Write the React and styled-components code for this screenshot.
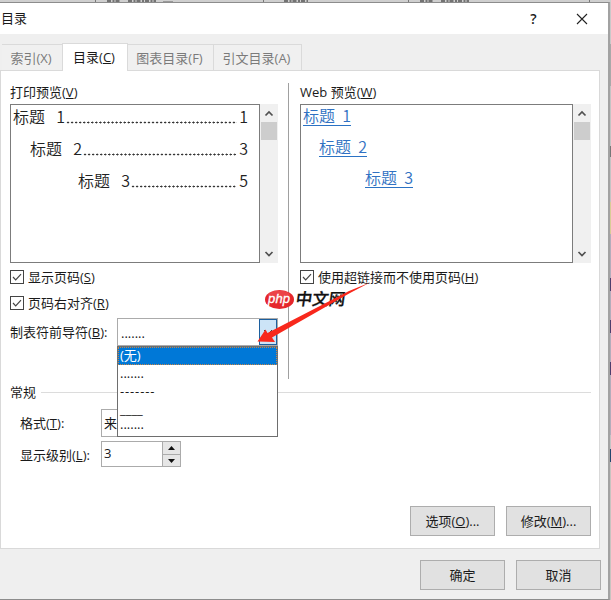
import styled, { createGlobalStyle, css } from 'styled-components'

const GlobalStyle = createGlobalStyle`
* { box-sizing: border-box; }
body {
  margin: 0;
  overflow: hidden;
  background: #c9c9c9;
  color: #1a1a1a;
  font-family: "Open Sans", "Noto Sans CJK SC", sans-serif;
  font-size: 13px;
}
`

const Desktop = styled.div`
position: relative;
display: grid;
grid-template-columns: 610px 1px;
grid-template-rows: 2px 598px;
width: 611px;
height: 600px;
overflow: hidden;
`

const Ribbon = styled.div`
grid-column: 1 / 3;
overflow: hidden;
background: #cfcfcf;
svg { display: block; }
`

const Strip = styled.div`
display: flex;
flex-direction: column;
background: #bdbdbd;
`

const Patch = styled.div`
height: ${(p) => p.$h}px;
background: ${(p) => p.$color};
`

const Dialog = styled.div`
display: flex;
flex-direction: column;
border: 1px solid #8c8c8c;
border-left: none;
border-right: 2px solid #a2a2a2;
background: #efefef;
`

const TitleBar = styled.div`
display: flex;
align-items: center;
height: 31px;
padding: 0 20px 0 1px;
background: #fff;
h1 {
  flex: 1;
  margin: 0;
  padding-bottom: 2px;
  font-size: 13px;
  font-weight: 400;
}
svg { display: block; }
`

const Help = styled.span`
width: 9px;
margin-right: 38px;
padding-bottom: 1px;
font-size: 14px;
font-weight: 600;
text-align: center;
`

const Tabs = styled.div`
display: flex;
align-items: flex-end;
height: 37px;
padding-left: 2px;
position: relative;
z-index: 1;
margin-bottom: -1px;
`

const Tab = styled.div`
width: ${(p) => p.$w}px;
height: 27px;
display: flex;
align-items: center;
justify-content: center;
padding: 0 2px 1px 0;
white-space: nowrap;
border: 1px solid #dadada;
border-left: none;
background: #f0f0f0;
color: #7b7b7b;
${(p) => p.$first && css`border-right: none;`}
${(p) => p.$active && css`
height: 28px;
padding-bottom: 3px;
border-left: 1px solid #dadada;
border-bottom: none;
background: #fff;
color: #1a1a1a;
`}
`

const Page = styled.div`
width: 600px;
height: 479px;
display: flex;
flex-direction: column;
padding: 12px 8px 12px 9px;
border: 1px solid #d9d9d9;
background: #fff;
`

const Columns = styled.div`
display: flex;
height: 296px;
`

const Column = styled.div`
display: flex;
flex-direction: column;
width: ${(p) => p.$w}px;
`

const Divider = styled.div`
width: 1px;
margin: 0 11px 0 10px;
background: #a0a0a0;
`

const Caption = styled.div`
height: 21px;
line-height: 18px;
white-space: nowrap;
`

const Preview = styled.div`
display: flex;
height: 159px;
`

const Sheet = styled.div`
flex: 1;
padding: 1px 11px 0 2px;
border: 1px solid #7c7c7c;
font-family: "Noto Sans CJK SC", sans-serif;
font-size: 16px;
font-weight: 350;
color: #222;
`

const Entry = styled.div`
display: flex;
height: ${(p) => p.$h || 32}px;
line-height: ${(p) => (p.$h ? 21 : 20)}px;
padding-left: ${(p) => p.$indent}px;
word-spacing: ${(p) => (p.$h ? 0 : 2)}px;
white-space: pre;
`

const Leader = styled.span`
flex: 1;
height: 18px;
margin: 0 2px 0 1px;
background: radial-gradient(circle, #333 0 0.8px, transparent 1.2px) left bottom / 4.05px 3px repeat-x;
`

const Link = styled.span`
height: 20px;
line-height: 19px;
border-bottom: 1px solid #2b72c4;
color: #3071c2;
`

const Scroll = styled.div`
display: flex;
flex-direction: column;
width: 18px;
padding-left: 1px;
background: #f0f0f0;
svg { display: block; }
`

const Thumb = styled.div`
height: 18px;
width: 16px;
margin-bottom: auto;
background: #cdcdcd;
`

const Check = styled.div`
display: flex;
align-items: center;
height: 14px;
margin-top: ${(p) => p.$top}px;
gap: 4px;
white-space: nowrap;
svg { display: block; }
> span { padding-bottom: 1px; }
`

const ComboRow = styled.div`
display: flex;
position: relative;
align-items: center;
height: 28px;
margin-top: 8px;
`

const ComboLabel = styled.span`
width: 107px;
padding-bottom: 2px;
white-space: nowrap;
`

const Combo = styled.div`
display: flex;
width: 161px;
height: 28px;
padding-left: 3px;
border: 1px solid #ababab;
line-height: 28px;
> span { flex: 1; }
`

const DropButton = styled.div`
display: flex;
align-items: center;
justify-content: center;
width: 18px;
border: 1px solid #1c5f9e;
background: #cce4f7;
`

const Menu = styled.div`
position: absolute;
z-index: 2;
top: 28px;
left: 107px;
width: 161px;
height: 91px;
border: 1px solid #6e6e6e;
background: #fff;
`

const Option = styled.div`
height: ${(p) => p.$h || 18}px;
padding-left: 2px;
line-height: ${(p) => p.$line || 17}px;
letter-spacing: ${(p) => p.$spacing || 0}px;
${(p) => p.$selected && css`
background: #0078d7;
color: #fff;
outline: 1px dotted #c98545;
outline-offset: -1px;
`}
`

const Legend = styled.div`
display: flex;
align-items: center;
gap: 5px;
height: 18px;
margin-top: 4px;
span { padding-bottom: 2px; }
&::after {
  content: "";
  flex: 1;
  height: 1px;
  background: #dcdcdc;
}
`

const Field = styled.div`
display: flex;
align-items: center;
height: ${(p) => p.$h}px;
margin-top: ${(p) => p.$top}px;
padding-left: 10px;
`

const FieldLabel = styled.span`
width: 81px;
padding-bottom: ${(p) => p.$lift || 0}px;
white-space: nowrap;
`

const Input = styled.div`
display: flex;
width: ${(p) => p.$w}px;
height: 100%;
padding-left: 2px;
border: 1px solid #ababab;
line-height: ${(p) => p.$line}px;
> span { flex: 1; }
`

const Spinner = styled.div`
display: flex;
flex-direction: column;
width: 18px;
background: #e6e6e6;
border-left: 1px solid #ababab;
svg { display: block; flex: 1; }
svg + svg { border-top: 1px solid #ababab; }
`

const Buttons = styled.div`
display: flex;
justify-content: flex-end;
gap: 11px;
margin-top: auto;
`

const Footer = styled(Buttons)`
margin-top: 11px;
padding-right: 7px;
`

const Button = styled.div`
display: flex;
align-items: center;
justify-content: center;
width: 85px;
height: 30px;
padding-bottom: 2px;
border: 1px solid #adadad;
background: #e1e1e1;
`

const Overlay = styled.svg`
position: absolute;
z-index: 3;
left: 250px;
top: 270px;
`

// slivers of the window behind the dialog's right edge
const patches = [
  [42, '#c9c9c9'], [42, '#a9a9a9'], [60, '#c4c4c4'], [11, '#777'], [45, '#c4c4c4'],
  [32, '#d9cc96'], [44, '#b3adbb'], [13, '#4e3d6c'], [29, '#b3adbb'], [13, '#4e3d6c'],
  [29, '#b3adbb'], [13, '#4e3d6c'], [60, '#b3adbb'], [14, '#c4c4c4'], [13, '#24466e'], [138, '#c8c4c0'],
]

function Key({ children, k, end = '' }) {
  return <span>{children}(<u>{k}</u>){end}</span>
}

function Scrollbar() {
  return (
    <Scroll>
      <svg width="16" height="18"><path d="M4.500 11.500L8 8l3.500 3.500" fill="none" stroke="#505050" strokeWidth="1.700" /></svg>
      <Thumb />
      <svg width="16" height="18"><path d="M4.500 7L8 10.500l3.500-3.500" fill="none" stroke="#505050" strokeWidth="1.700" /></svg>
    </Scroll>
  )
}

function Tick({ children, top }) {
  return (
    <Check $top={top}>
      <svg width="14" height="14">
        <rect x=".5" y=".5" width="13" height="13" fill="#fff" stroke="#444" />
        <path d="M3 7l2.700 2.800L11 4.200" fill="none" stroke="#444" strokeWidth="1.200" />
      </svg>
      {children}
    </Check>
  )
}

function App() {
  return (
    <>
      <GlobalStyle />
      <Desktop>
        <Ribbon>
          <svg width="611" height="2">
            <path d="M107 1h14M128 1h28M284 1h24M420 1h14M441 1h28" stroke="#555" strokeWidth="1.500" strokeDasharray="4 1.500 2 1" />
            <path d="M163 1.500h10" stroke="#999" />
            <path d="M95.500 0v2M263.500 0v2M408.500 0v2M589.500 0v2" stroke="#777" />
          </svg>
        </Ribbon>
        <Dialog>
          <TitleBar>
            <h1>目录</h1>
            <Help>?</Help>
            <svg width="12" height="12"><path d="M1 1l10 10M11 1L1 11" stroke="#222" strokeWidth="1.100" /></svg>
          </TitleBar>
          <Tabs>
            <Tab $w={60} $first>索引(X)</Tab>
            <Tab $w={66} $active><Key k="C">目录</Key></Tab>
            <Tab $w={86}>图表目录(F)</Tab>
            <Tab $w={88}>引文目录(A)</Tab>
          </Tabs>
          <Page>
            <Columns>
              <Column $w={268}>
                <Caption><Key k="V">打印预览</Key></Caption>
                <Preview>
                  <Sheet>
                    <Entry $indent={0}>标题  1<Leader />1</Entry>
                    <Entry $indent={17}>标题  2<Leader />3</Entry>
                    <Entry $indent={65}>标题  3<Leader />5</Entry>
                  </Sheet>
                  <Scrollbar />
                </Preview>
                <Tick top={7}><Key k="S">显示页码</Key></Tick>
                <Tick top={12}><Key k="R">页码右对齐</Key></Tick>
                <ComboRow>
                  <ComboLabel><Key k="B" end=":">制表符前导符</Key></ComboLabel>
                  <Combo>
                    <span>.......</span>
                    <DropButton>
                      <svg width="10" height="6"><path d="M1 1l4 4 4-4" fill="none" stroke="#444" /></svg>
                    </DropButton>
                  </Combo>
                  <Menu>
                    <Option $selected>(无)</Option>
                    <Option>.......</Option>
                    <Option $spacing={0.85}>-------</Option>
                    <Option $h={17}>____</Option>
                    <Option $h={14} $line={12}>.......</Option>
                  </Menu>
                </ComboRow>
              </Column>
              <Divider />
              <Column $w={291}>
                <Caption><Key k="W">Web 预览</Key></Caption>
                <Preview>
                  <Sheet>
                    <Entry $h={31} $indent={0}><Link>标题  1</Link></Entry>
                    <Entry $h={31} $indent={16}><Link>标题  2</Link></Entry>
                    <Entry $h={31} $indent={62}><Link>标题  3</Link></Entry>
                  </Sheet>
                  <Scrollbar />
                </Preview>
                <Tick top={7}><Key k="H">使用超链接而不使用页码</Key></Tick>
              </Column>
            </Columns>
            <Legend><span>常规</span></Legend>
            <Field $h={28} $top={8}>
              <FieldLabel $lift={2}><Key k="T" end=":">格式</Key></FieldLabel>
              <Input $w={177} $line={27}>来</Input>
            </Field>
            <Field $h={26} $top={4}>
              <FieldLabel><Key k="L" end=":">显示级别</Key></FieldLabel>
              <Input $w={80} $line={23}>
                <span>3</span>
                <Spinner>
                  <svg width="17" height="12"><path d="M5 8l3.500-4L12 8z" fill="#111" /></svg>
                  <svg width="17" height="12"><path d="M5 4l3.500 4L12 4z" fill="#111" /></svg>
                </Spinner>
              </Input>
            </Field>
            <Buttons>
              <Button><Key k="O" end="...">选项</Key></Button>
              <Button><Key k="M" end="...">修改</Key></Button>
            </Buttons>
          </Page>
          <Footer>
            <Button>确定</Button>
            <Button>取消</Button>
          </Footer>
        </Dialog>
        <Strip>
          {patches.map(([h, color], i) => <Patch key={i} $h={h} $color={color} />)}
        </Strip>
        <Overlay width="130" height="90">
          <ellipse cx="29.500" cy="29.500" rx="14.500" ry="9.500" fill="#e5262b" />
          <ellipse cx="29" cy="25" rx="11" ry="4.500" fill="#f0575a" opacity=".6" />
          <text x="18" y="33" fontSize="13" fontStyle="italic" fontWeight="400" fill="#fff" stroke="#fff" strokeWidth=".3" textLength="22" fontFamily="Liberation Sans, sans-serif">php</text>
          <text x="46" y="35" fontSize="16.500" fontWeight="500" transform="skewX(-8) translate(4 0)" fill="#111" stroke="#111" strokeWidth=".3" fontFamily="Noto Sans CJK SC, sans-serif">中文网</text>
          <path d="M120 12.500L99 21 17.500 63l-2-3.500L7.500 71.500 25 72l-3-4.500L100 23z" fill="#f8281c" />
        </Overlay>
      </Desktop>
    </>
  )
}

export default App
